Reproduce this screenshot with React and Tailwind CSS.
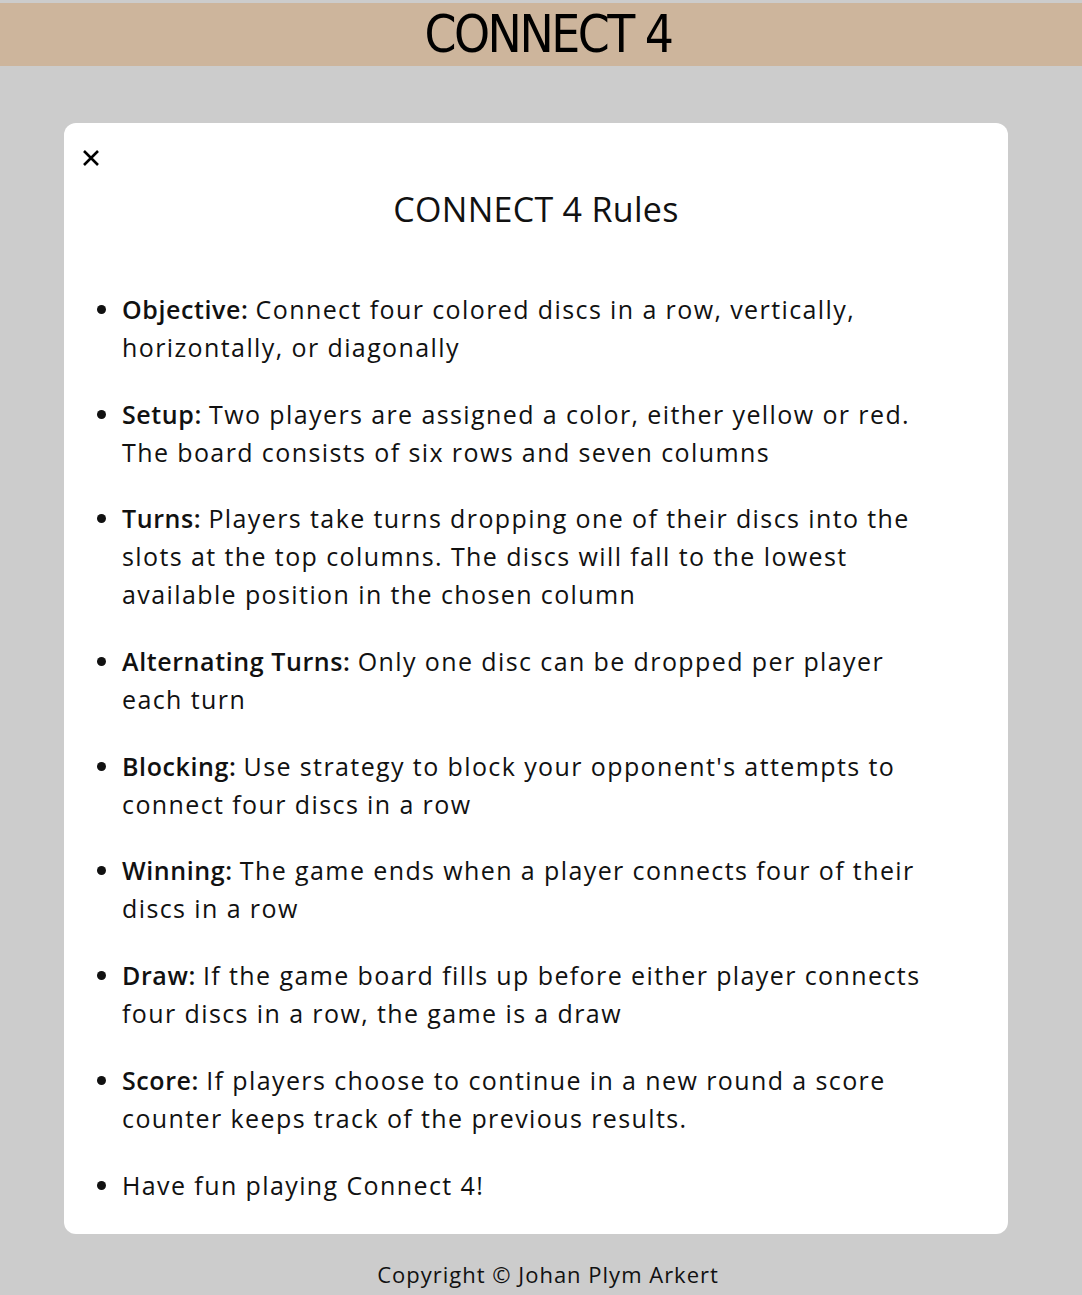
import React from "react";

const rules = [
  {
    label: "Objective:",
    text: "Connect four colored discs in a row, vertically, horizontally, or diagonally",
  },
  {
    label: "Setup:",
    text: "Two players are assigned a color, either yellow or red. The board consists of six rows and seven columns",
  },
  {
    label: "Turns:",
    text: "Players take turns dropping one of their discs into the slots at the top columns. The discs will fall to the lowest available position in the chosen column",
  },
  {
    label: "Alternating Turns:",
    text: "Only one disc can be dropped per player each turn",
  },
  {
    label: "Blocking:",
    text: "Use strategy to block your opponent's attempts to connect four discs in a row",
  },
  {
    label: "Winning:",
    text: "The game ends when a player connects four of their discs in a row",
  },
  {
    label: "Draw:",
    text: "If the game board fills up before either player connects four discs in a row, the game is a draw",
  },
  {
    label: "Score:",
    text: "If players choose to continue in a new round a score counter keeps track of the previous results.",
  },
  { label: null, text: "Have fun playing Connect 4!" },
];

const App = () => {
  return (
    <div
      className="min-h-screen bg-[#cccccc] text-[#111] pt-[3px]"
      style={{ fontFamily: "'Open Sans', sans-serif" }}
    >
      {/* --- HEADER --- */}
      <header className="h-[63px] bg-[#cdb59c] flex items-center justify-center">
        <h1
          className="ml-[14px] text-[51px] font-normal tracking-[-2.5px] leading-none text-black"
          style={{ fontFamily: "'DejaVu Sans Condensed', 'DejaVu Sans', sans-serif" }}
        >
          CONNECT 4
        </h1>
      </header>

      {/* --- RULES MODAL --- */}
      <div className="ml-[64px] mt-[57px] w-[944px] bg-white rounded-[12px] pt-[26px] pb-[30px] pl-[18px]">
        <button className="block w-[18px] h-[18px] text-black">
          <svg viewBox="0 0 18 18" className="w-[18px] h-[18px]">
            <path d="M2 2 L16 16 M16 2 L2 16" stroke="currentColor" strokeWidth="2.6" />
          </svg>
        </button>
        <h2 className="mt-[20px] pr-[18px] text-center text-[34px] font-medium tracking-[0.3px] leading-[44px]">
          CONNECT 4 Rules
        </h2>

        <ul className="mt-[59px] pl-[40px] w-[846px] list-disc flex flex-col gap-[28.7px] text-[25px] tracking-[1.4px] leading-[38px]">
          {rules.map((rule, i) => (
            <li key={i}>
              {rule.label && <span className="font-semibold tracking-[0.6px]">{rule.label} </span>}
              {rule.text}
            </li>
          ))}
        </ul>
      </div>

      {/* --- FOOTER --- */}
      <footer className="pl-[14px] pt-[25px] pb-[8px] text-center text-[22px] tracking-[1px] leading-[30px]">
        Copyright © Johan Plym Arkert
      </footer>
    </div>
  );
};

export default App;
